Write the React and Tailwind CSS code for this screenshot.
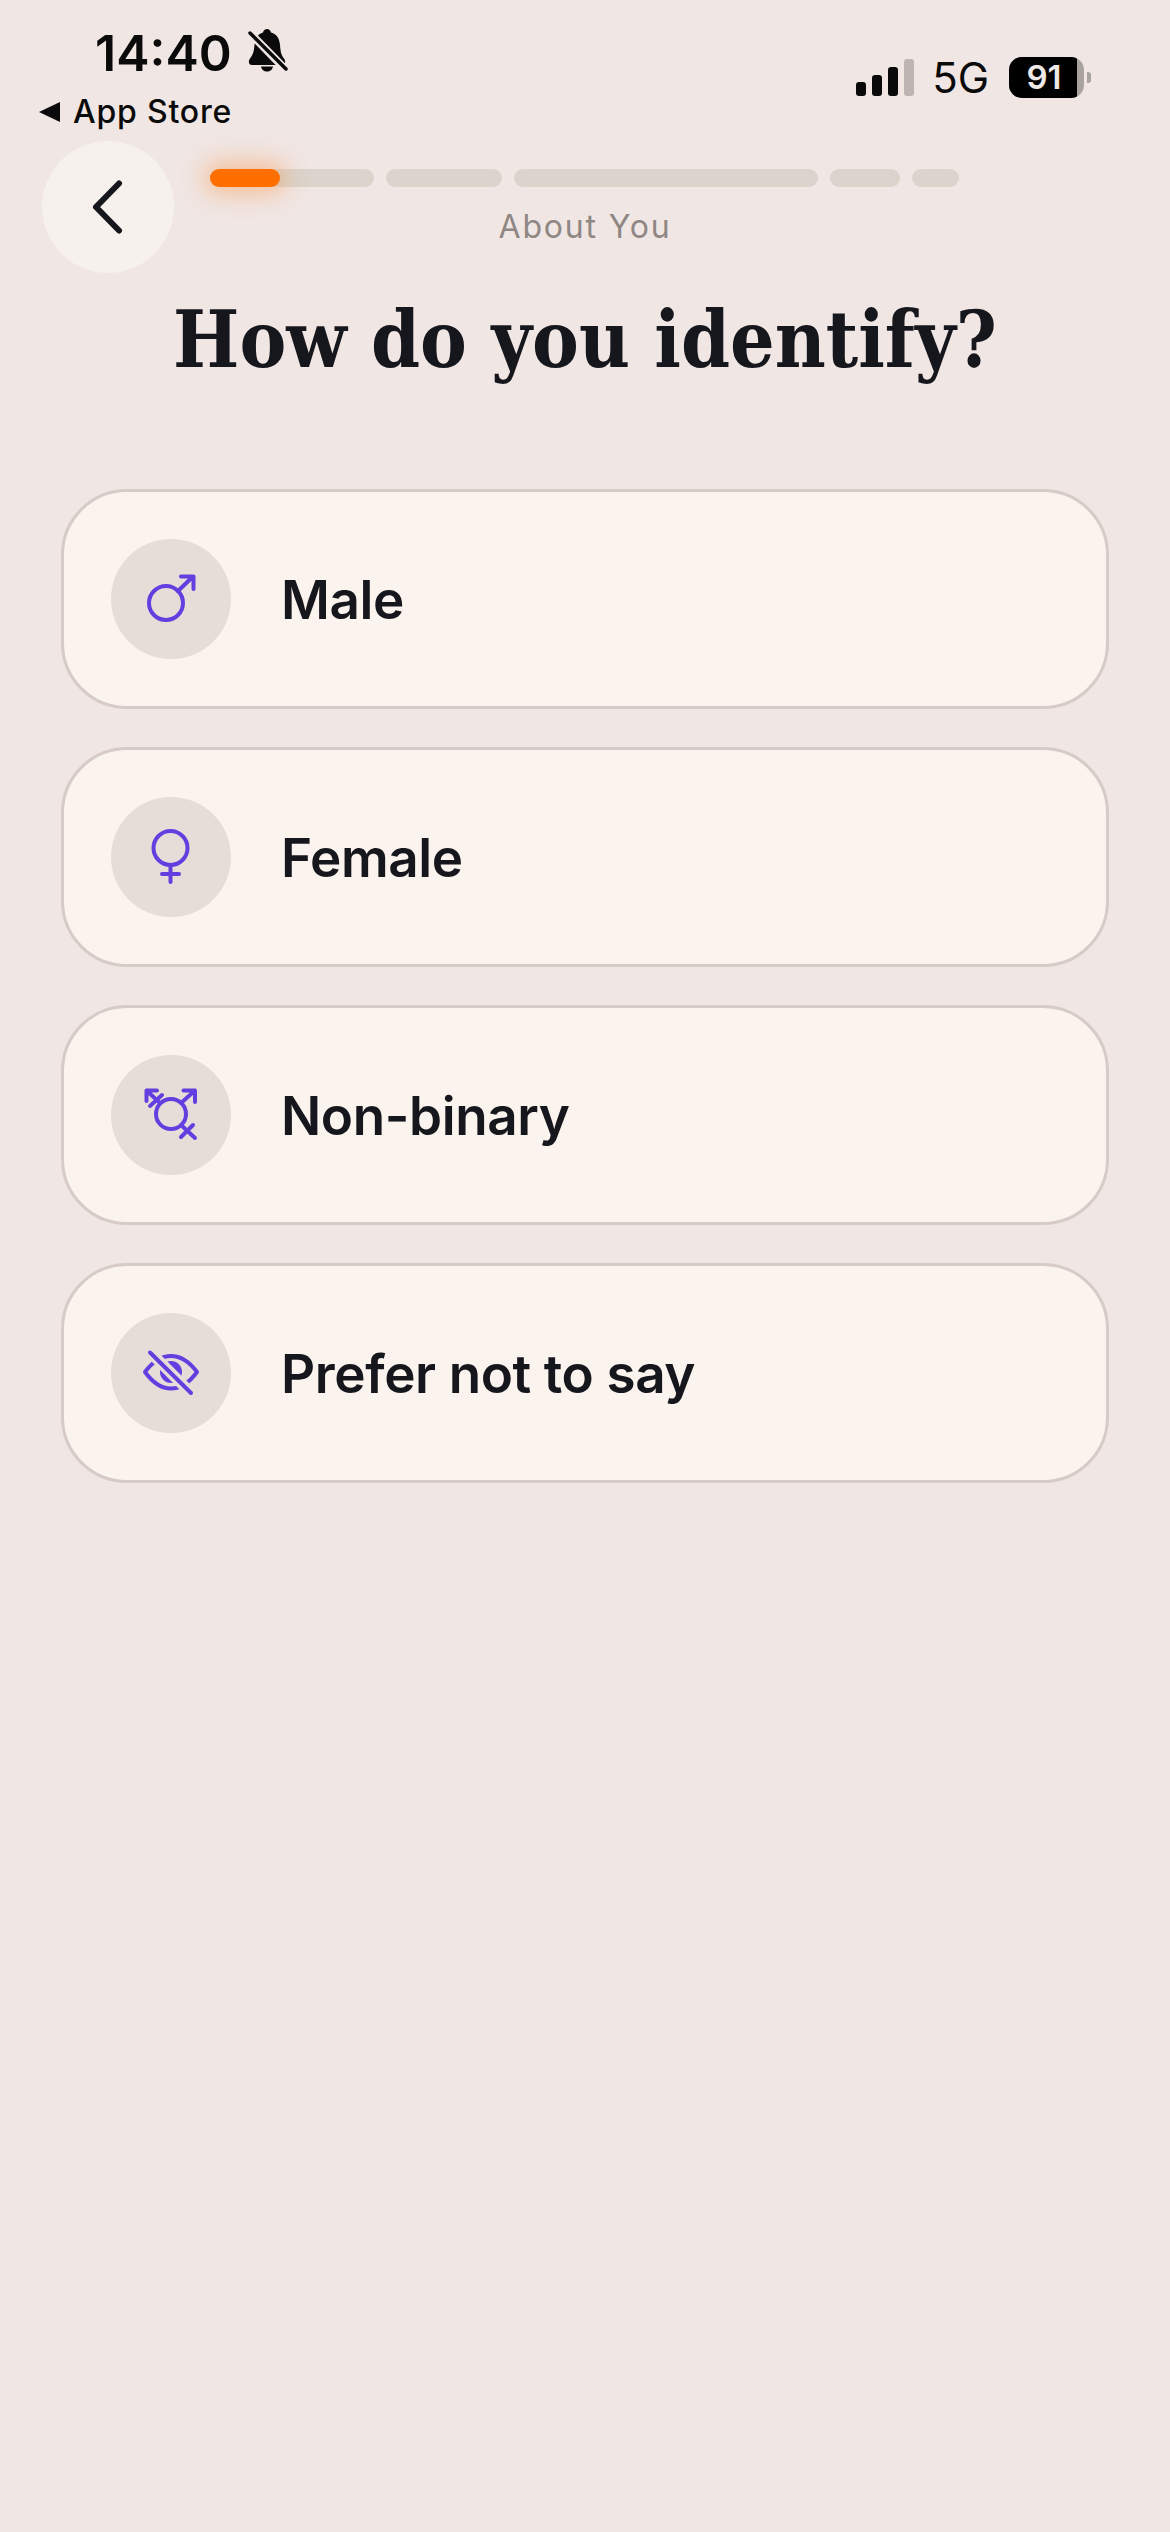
import React from "react";

const inter = "font-['Inter',sans-serif]";

function MaleIcon() {
  return (
    <svg width="64" height="64" viewBox="0 0 64 64" fill="none" stroke="#6240E0" strokeWidth="4" strokeLinecap="round" strokeLinejoin="round">
      <circle cx="27" cy="36" r="17" />
      <path d="M39 24L54 9.5M42 9.5H54.5V22" />
    </svg>
  );
}

function FemaleIcon() {
  return (
    <svg width="64" height="64" viewBox="0 0 64 64" fill="none" stroke="#6240E0" strokeWidth="4" strokeLinecap="round" strokeLinejoin="round">
      <circle cx="31.5" cy="23" r="17" />
      <path d="M31.5 40V57M23 49H40" />
    </svg>
  );
}

function NonBinaryIcon() {
  return (
    <svg width="64" height="64" viewBox="0 0 64 64" fill="none" stroke="#6240E0" strokeWidth="4" strokeLinecap="round" strokeLinejoin="round">
      <circle cx="32" cy="31" r="15" />
      <path d="M42 20L56 7.5M44.5 7.5H56V19" />
      <path d="M21 20L7.5 7.5M18 7.5H7.5V18M11 23L23 12" />
      <path d="M42 42L56 55M42 54L54 42" />
    </svg>
  );
}

function HiddenIcon() {
  return (
    <svg width="64" height="64" viewBox="0 0 64 64" fill="none" stroke="#6240E0" strokeWidth="4" strokeLinecap="round" strokeLinejoin="round">
      <path d="M6 31Q18 15 32 15Q46 15 58 31Q46 47.5 32 47.5Q18 47.5 6 31Z" />
      <circle cx="32" cy="31" r="11" fill="#6240E0" stroke="none" />
      <path d="M11 11L52 52" stroke="#E5DDD8" strokeWidth="11" strokeLinecap="butt" />
      <path d="M11 11.5L52 52" />
    </svg>
  );
}

function BellSlash() {
  return (
    <svg width="40" height="44" viewBox="0 0 40 44">
      <path d="M19 0C21 0 22.5 1.5 23 3.5C29 5 31.5 10 32 16C32.5 22 33 26 36 29.5C38 32 37.5 36 34 36H4C0.5 36 0 32 2 29.5C5 26 6 22 6.5 16C7 10 9.5 5 15 3.5C15.5 1.5 17 0 19 0Z" fill="#0a0a0a" />
      <path d="M13 37.5H25C24.5 40.5 22 42.5 19 42.5C16 42.5 13.5 40.5 13 37.5Z" fill="#0a0a0a" />
      <path d="M1 3L38 41" stroke="#F0E6E3" strokeWidth="8" />
      <path d="M2 4L38 40" stroke="#0a0a0a" strokeWidth="3.5" strokeLinecap="round" />
    </svg>
  );
}

function StatusBar() {
  return (
    <div className={`flex h-[141px] justify-between text-[#0a0a0a] ${inter}`}>
      <div className="pl-[39px] pt-[28px]">
        <div className="flex items-center pl-[56px]">
          <span className="text-[50px] leading-[50px] font-semibold">14:40</span>
          <span className="ml-[16px] -mt-[4px]"><BellSlash /></span>
        </div>
        <div className="mt-[16px] flex items-center">
          <svg width="21" height="20" viewBox="0 0 21 20"><path d="M0 10L21 0V20Z" fill="#0a0a0a" /></svg>
          <span className="ml-[13px] text-[32px] leading-[36px] font-medium tracking-[0.8px]">App Store</span>
        </div>
      </div>
      <div className="flex h-[98px] items-center pt-[57px] pr-[79px]">
        <div className="flex items-end gap-[6px] h-[37px]">
          <div className="h-[14px] w-[10px] rounded-[3px] bg-[#0a0a0a]" />
          <div className="h-[21px] w-[10px] rounded-[3px] bg-[#0a0a0a]" />
          <div className="h-[29px] w-[10px] rounded-[3px] bg-[#0a0a0a]" />
          <div className="h-[37px] w-[10px] rounded-[3px] bg-[#BDB5B2]" />
        </div>
        <span className="ml-[18px] text-[42px] leading-[41px] font-normal">5G</span>
        <div className="ml-[20px] flex h-[41px] w-[75px] overflow-hidden rounded-[13px] bg-[#A8A2A0]">
          <div className="flex w-[68px] items-center justify-center rounded-r-[2px] bg-black pl-[2px] text-[33px] leading-[41px] font-semibold text-[#EFE8E5]">91</div>
        </div>
        <div className="ml-[3px] h-[11px] w-[4px] rounded-r-[3px] bg-[#A8A2A0]" />
      </div>
    </div>
  );
}

function Progress() {
  return (
    <div className="w-[750px] pt-[28px]">
      <div className="flex gap-[12px]">
        <div className="h-[18px] w-[164px] rounded-full bg-[#DAD4CC]">
          <div className="h-[18px] w-[70px] rounded-full bg-[#FF6F00] shadow-[0_0_24px_6px_rgba(255,111,0,0.35)]" />
        </div>
        <div className="h-[18px] w-[116px] rounded-full bg-[#DAD4CC]" />
        <div className="h-[18px] w-[304px] rounded-full bg-[#DAD4CC]" />
        <div className="h-[18px] w-[70px] rounded-full bg-[#DAD4CC]" />
        <div className="h-[18px] w-[47px] rounded-full bg-[#DAD4CC]" />
      </div>
      <p className={`mt-[20px] text-center text-[32px] leading-[40px] tracking-[1.8px] text-[#8F8784] ${inter}`}>About You</p>
    </div>
  );
}

const options = [
  { label: "Male", icon: <MaleIcon /> },
  { label: "Female", icon: <FemaleIcon /> },
  { label: "Non-binary", icon: <NonBinaryIcon /> },
  { label: "Prefer not to say", icon: <HiddenIcon /> },
];

export default function App() {
  return (
    <div className="min-h-[2532px] bg-[#F0E6E3]">
      <StatusBar />

      {/* header */}
      <div className="flex h-[132px] pl-[42px] gap-[36px]">
        <button className="flex h-[132px] w-[132px] items-center justify-center rounded-full bg-[#F6F1EC]">
          <svg width="36" height="56" viewBox="0 0 36 56" fill="none" stroke="#16161D" strokeWidth="6" strokeLinecap="round" strokeLinejoin="round">
            <path d="M29 4.5L6 28L29 51.5" />
          </svg>
        </button>
        <Progress />
      </div>

      <h1 className="mt-[17px] text-center font-['DejaVu_Serif_Condensed','DejaVu_Serif',serif] text-[78px] leading-[100px] font-bold text-[#16161D]">
        How do you identify?
      </h1>

      <div className="mx-[61px] mt-[99px] flex flex-col gap-[38px]">
        {options.map((o) => (
          <div key={o.label} className="flex h-[220px] items-center gap-[50px] rounded-[66px] border-[3px] border-[#D6CBC6] bg-[#FBF3EE] pl-[47px]">
            <div className="flex h-[120px] w-[120px] items-center justify-center rounded-full bg-[#E5DDD8]">{o.icon}</div>
            <span className={`pt-[3px] text-[53px] font-[560] tracking-[-0.4px] text-[#16161D] ${inter}`}>{o.label}</span>
          </div>
        ))}
      </div>
    </div>
  );
}
